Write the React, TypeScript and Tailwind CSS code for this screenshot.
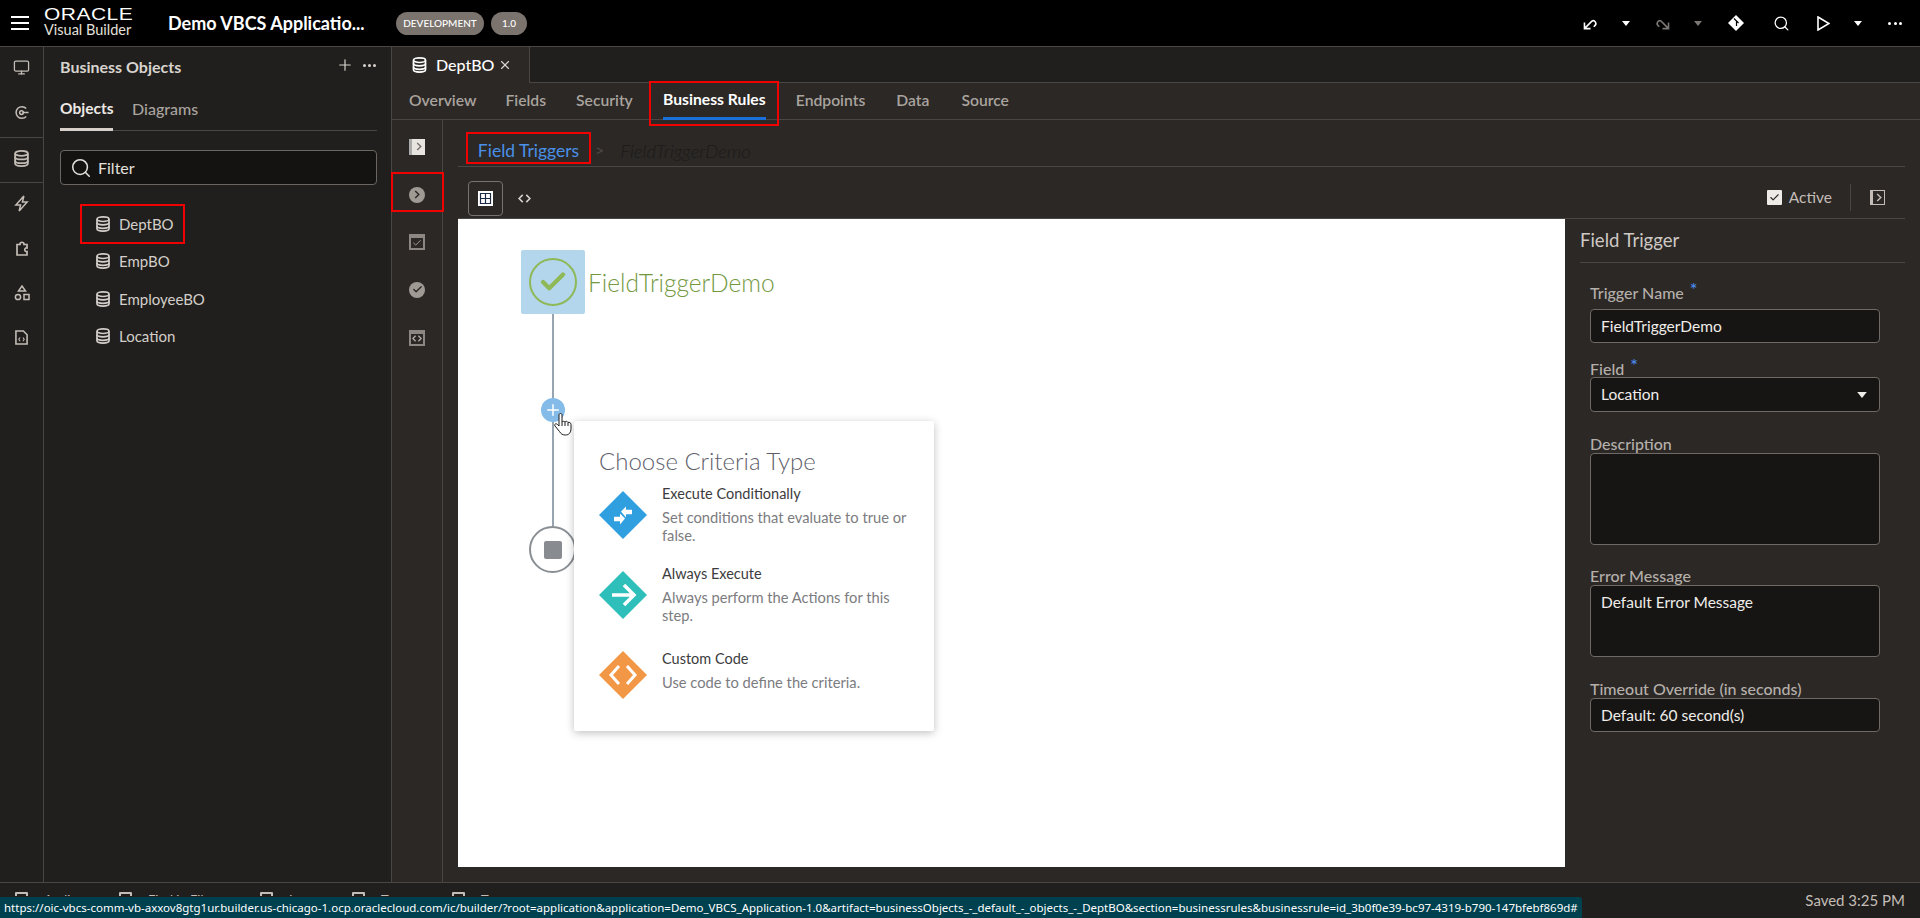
import type { ReactNode } from 'react'
import { Check, Monitor, Plus, Search, X } from 'lucide-react'

const FONT = "font-['Lato','Noto_Sans',sans-serif]"

function Db({ className = 'w-[14px] h-[16px]' }: { className?: string }) {
  return (
    <svg viewBox="0 0 14 16" className={`shrink-0 ${className}`} fill="none" stroke="currentColor" strokeWidth="1.7">
      <ellipse cx="7" cy="3.2" rx="6" ry="2.3" />
      <path d="M1 3.2v9.6c0 1.3 2.7 2.3 6 2.3s6-1 6-2.3V3.2" />
      <path d="M1 6.5c0 1.3 2.7 2.3 6 2.3s6-1 6-2.3M1 10c0 1.3 2.7 2.3 6 2.3s6-1 6-2.3" />
    </svg>
  )
}

function Caret({ className = 'w-[8px] h-[5px]' }: { className?: string }) {
  return (
    <svg viewBox="0 0 8 5" className={className} fill="currentColor">
      <path d="M0 0h8L4 5z" />
    </svg>
  )
}

function Chevron({ stroke = 'currentColor' }: { stroke?: string }) {
  return (
    <svg viewBox="0 0 6 10" className="w-[6px] h-[9px]" fill="none" stroke={stroke} strokeWidth="1.6">
      <path d="M1 1l4 4-4 4" />
    </svg>
  )
}

function RailIcon({ children, className = 'h-[45px]' }: { children: ReactNode; className?: string }) {
  return <div className={`flex items-center justify-center text-[#c4bdb7] ${className}`}>{children}</div>
}

function ObjectRow({ name, boxed }: { name: string; boxed?: boolean }) {
  return (
    <div
      className={`flex items-center h-[37.5px] w-[103px] ml-[21px] pl-[15px] gap-[9px] whitespace-nowrap text-[15px] text-[#d4cfca] ${
        boxed ? 'outline-2 -outline-offset-1 outline-[#f00000]' : ''
      }`}
    >
      <Db />
      <span>{name}</span>
    </div>
  )
}

function SideSquare({ children }: { children: ReactNode }) {
  return <div className="h-[47.7px] flex items-center justify-center text-[#a09a95]">{children}</div>
}

function Label({ text, star, className = '' }: { text: string; star?: boolean; className?: string }) {
  return (
    <div className={`flex text-[16px] font-medium text-[#b5afaa] leading-[18px] ${className}`}>
      {text}
      {star && <span className="ml-[6px] -mt-[4px] text-[18px] leading-[18px] text-[#4a8cf0]">*</span>}
    </div>
  )
}

function Box({ children, className = '' }: { children?: ReactNode; className?: string }) {
  return (
    <div className={`bg-[#161514] border border-[#6f6a65] rounded-[4px] px-[10px] text-[15.5px] text-[#f0ede9] ${className}`}>
      {children}
    </div>
  )
}

function Diamond({ color, children, y }: { color: string; children: ReactNode; y: string }) {
  return (
    <div className={`absolute left-[25px] ${y} w-[48px] h-[48px]`}>
      <svg viewBox="0 0 48 48" className="w-full h-full">
        <path d="M24 0l24 24-24 24L0 24z" fill={color} />
        {children}
      </svg>
    </div>
  )
}

function BottomItem({ label, width }: { label: string; width: string }) {
  return (
    <div className={`flex items-start gap-[16px] ${width} shrink-0 h-[4px] overflow-hidden text-[13px] leading-[16px] text-[#c4bdb7]`}>
      <div className="w-[13px] h-[13px] shrink-0 border-2 border-[#c4bdb7] rounded-[1px]" />
      <span className="whitespace-nowrap">{label}</span>
    </div>
  )
}

function CriteriaText({ title, desc, top }: { title: string; desc: string; top: string }) {
  return (
    <div className={`absolute left-[88px] ${top} w-[256px]`}>
      <div className="text-[14.5px] leading-[20px] text-[#3c3c40]">{title}</div>
      <div className="mt-[4px] text-[14.7px] leading-[18px] text-[#7c7c7f]">{desc}</div>
    </div>
  )
}

export default function App() {
  return (
    <div className={`relative w-[1920px] h-[918px] overflow-hidden bg-[#201f1d] flex flex-col ${FONT}`}>
      {/* top bar */}
      <header className="h-[47px] shrink-0 bg-black border-b border-[#4a4643] flex items-center text-white">
        <div className="ml-[11px] w-[18px] flex flex-col gap-[3.5px]">
          <div className="h-[2.5px] bg-white" />
          <div className="h-[2.5px] bg-white" />
          <div className="h-[2.5px] bg-white" />
        </div>
        <div className="ml-[15px] w-[110px] flex flex-col -mt-[1px]">
          <div className="text-[16.5px] leading-[14px] tracking-[0.4px] origin-left scale-x-[1.27] font-['Liberation_Sans',sans-serif]">ORACLE</div>
          <div className="text-[14.5px] leading-[16px] mt-[1px] text-[#e4e0dc]">Visual Builder</div>
        </div>
        <div className="ml-[14px] w-[228px] text-[18px] font-bold">Demo VBCS Applicatio...</div>
        <div className="h-[23px] w-[88px] rounded-full bg-[#7b736e] flex items-center justify-center text-[10px] font-medium">DEVELOPMENT</div>
        <div className="ml-[7px] h-[23px] w-[36px] rounded-full bg-[#7b736e] flex items-center justify-center text-[10px] font-medium">1.0</div>
        <div className="ml-auto flex items-center">
          <svg viewBox="0 0 16 14" className="w-[15px] h-[13px]" fill="none" stroke="currentColor" strokeWidth="1.7">
            <path d="M1.5 12.5l8-8c3-2 5.5 2.5 3.5 4.5l-1.5 1.5M1.5 6v6.5H8" />
          </svg>
          <Caret className="ml-[24px] w-[8px] h-[5px]" />
          <svg viewBox="0 0 16 14" className="ml-[25px] w-[15px] h-[13px] text-[#7a7673]" fill="none" stroke="currentColor" strokeWidth="1.7">
            <path d="M14.5 12.5l-8-8c-3-2-5.5 2.5-3.5 4.5l1.5 1.5M14.5 6v6.5H8" />
          </svg>
          <Caret className="ml-[24px] w-[8px] h-[5px] text-[#7a7673]" />
          <svg viewBox="0 0 16 16" className="ml-[26px] w-[16px] h-[16px]">
            <path d="M8 0l8 8-8 8-8-8z" fill="#fff" />
            <path d="M6 3.5l2.5 2.5v5M8.5 6l2 2" stroke="#000" strokeWidth="1.2" fill="none" />
          </svg>
          <Search size={17} className="ml-[29px]" strokeWidth={1.8} />
          <svg viewBox="0 0 13 15" className="ml-[27px] w-[13px] h-[15px]" fill="none" stroke="currentColor" strokeWidth="1.6">
            <path d="M1 1l11 6.5L1 14z" />
          </svg>
          <Caret className="ml-[24px] w-[8px] h-[5px]" />
          <div className="ml-[26px] mr-[18px] flex gap-[2.5px]">
            <div className="w-[3px] h-[3px] rounded-full bg-white" />
            <div className="w-[3px] h-[3px] rounded-full bg-white" />
            <div className="w-[3px] h-[3px] rounded-full bg-white" />
          </div>
        </div>
      </header>

      <div className="h-[835px] shrink-0 flex">
        {/* left rail */}
        <nav className="w-[44px] shrink-0 border-r border-[#4a4643] flex flex-col">
          <RailIcon className="h-[40px]"><Monitor size={17} strokeWidth={1.8} /></RailIcon>
          <RailIcon className="h-[50px]">
            <svg viewBox="0 0 16 16" className="w-[15px] h-[15px]" fill="none" stroke="currentColor" strokeWidth="1.6">
              <path d="M13 3.8A6.2 6.2 0 1 0 13 12.2" />
              <circle cx="8" cy="8" r="2" />
              <path d="M9 8h6.5" />
            </svg>
          </RailIcon>
          <div className="border-y border-[#4a4643]">
            <RailIcon className="h-[44px] pb-[3px]"><Db className="w-[15px] h-[17px]" /></RailIcon>
          </div>
          <RailIcon className="h-[42px] pb-[2px]">
            <svg viewBox="0 0 16 18" className="w-[15px] h-[17px]" fill="none" stroke="currentColor" strokeWidth="1.6">
              <path d="M10.5 1L2 10.5h5L5.5 17 14 7.5H9z" />
            </svg>
          </RailIcon>
          <RailIcon>
            <svg viewBox="0 0 16 16" className="w-[16px] h-[16px]" fill="none" stroke="currentColor" strokeWidth="1.7">
              <path d="M3 15V4.5h3c-.5-3 4.5-3 4 0h3V8c-3-.5-3 4 0 3.500V15z" />
            </svg>
          </RailIcon>
          <RailIcon>
            <svg viewBox="0 0 16 16" className="w-[16px] h-[16px]" fill="none" stroke="currentColor" strokeWidth="1.5">
              <path d="M8 1l3.5 5h-7z" />
              <circle cx="4" cy="12" r="2.6" />
              <rect x="10" y="9.5" width="5" height="5" />
            </svg>
          </RailIcon>
          <RailIcon>
            <svg viewBox="0 0 14 16" className="w-[13px] h-[15px]" fill="none" stroke="currentColor" strokeWidth="1.7">
              <path d="M1 1h8l4 4v10H1z" />
              <path d="M5.5 8L4 10l1.5 2M8.5 8L10 10l-1.5 2" strokeWidth="1.1" />
            </svg>
          </RailIcon>
        </nav>

        {/* business objects panel */}
        <aside className="w-[348px] shrink-0 border-r border-[#4a4643]">
          <div className="pl-[16px] pr-[14px]">
            <div className="h-[40px] flex items-center text-[#d8d3ce]">
              <span className="text-[16px] font-bold">Business Objects</span>
              <Plus size={18} className="ml-auto -mt-[4px]" strokeWidth={1.6} />
              <div className="ml-[9px] mr-[1px] -mt-[4px] flex gap-[2px]">
                <div className="w-[3px] h-[3px] rounded-full bg-[#d8d3ce]" />
                <div className="w-[3px] h-[3px] rounded-full bg-[#d8d3ce]" />
                <div className="w-[3px] h-[3px] rounded-full bg-[#d8d3ce]" />
              </div>
            </div>
            <div className="h-[44px] border-b border-[#4a4643] flex items-stretch text-[15.5px]">
              <div className="w-[53px] border-b-[3px] border-[#d6cfca] -mb-px pt-[10px] font-bold text-[#ece8e4] whitespace-nowrap">Objects</div>
              <div className="ml-[19px] pt-[10px] text-[16px] font-medium text-[#aaa49f]">Diagrams</div>
            </div>
            <div className="mt-[19px] h-[35px] bg-[#141312] border border-[#6b6661] rounded-[4px] flex items-center pl-[9px] text-[16px] text-[#e4e0dc]">
              <Search size={22} strokeWidth={1.7} />
              <span className="ml-[6px]">Filter</span>
            </div>
          </div>
          <div className="mt-[20px] pl-[16px]">
            <ObjectRow name="DeptBO" boxed />
            <ObjectRow name="EmpBO" />
            <ObjectRow name="EmployeeBO" />
            <ObjectRow name="Location" />
          </div>
        </aside>

        {/* editor */}
        <main className="flex-1 min-w-0 flex flex-col">
          <div className="h-[36px] shrink-0 flex items-stretch border-b border-[#4a4643]">
            <div className="w-[138px] -mb-px bg-[#2b2826] border-r border-[#4a4643] flex items-center pl-[20px] text-white text-[16px] font-medium">
              <Db className="w-[15px] h-[16px]" />
              <span className="ml-[9px]">DeptBO</span>
              <X size={14} className="ml-[4px] text-[#d8d3ce]" />
            </div>
          </div>
          <div className="flex-1 min-h-0 flex flex-col bg-[#2b2826]">
            <div className="h-[37px] shrink-0 border-b border-[#4a4643] flex items-stretch pl-[17px] text-[15.7px] font-semibold text-[#a9a39e]">
              <div className="flex items-center">Overview</div>
              <div className="flex items-center ml-[29px]">Fields</div>
              <div className="flex items-center ml-[30px]">Security</div>
              <div className="relative flex items-center ml-[30px] w-[103px] justify-center whitespace-nowrap font-bold text-white border-b-[3px] border-[#1a6fd8] -mb-px">
                Business Rules
                <div className="absolute -left-[14px] -right-[13px] -top-[2px] h-[45px] border-2 border-[#f00000]" />
              </div>
              <div className="flex items-center ml-[30px]">Endpoints</div>
              <div className="flex items-center ml-[31px]">Data</div>
              <div className="flex items-center ml-[32px]">Source</div>
            </div>
            <div className="flex-1 min-h-0 flex">
              {/* rule steps rail */}
              <div className="relative w-[51px] shrink-0 border-r border-[#4a4643] pt-[3px]">
                <SideSquare>
                  <div className="w-[16px] h-[16px] bg-[#e8e4e0] flex items-center justify-center text-[#77726e] border-l-[3px] border-[#aaa]">
                    <Chevron />
                  </div>
                </SideSquare>
                <SideSquare>
                  <div className="w-[16px] h-[16px] rounded-full bg-[#a09a95] flex items-center justify-center">
                    <Chevron stroke="#2b2826" />
                  </div>
                </SideSquare>
                <SideSquare>
                  <div className="w-[16px] h-[16px] border-2 border-t-4 border-[#8c8783] flex items-center justify-center text-[#b5afaa]">
                    <Check size={10} strokeWidth={2} />
                  </div>
                </SideSquare>
                <SideSquare>
                  <div className="w-[16px] h-[16px] rounded-full bg-[#a09a95] flex items-center justify-center text-[#2b2826]">
                    <Check size={11} strokeWidth={3} />
                  </div>
                </SideSquare>
                <SideSquare>
                  <div className="w-[16px] h-[16px] border-2 border-t-4 border-[#8c8783] flex items-center justify-center text-[#b5afaa]">
                    <svg viewBox="0 0 14 10" className="w-[10px] h-[7px]" fill="none" stroke="currentColor" strokeWidth="1.8">
                      <path d="M5 1L1 5l4 4M9 1l4 4-4 4" />
                    </svg>
                  </div>
                </SideSquare>
                <div className="absolute -left-px top-[52px] w-[53px] h-[40px] border-2 border-[#f00000]" />
              </div>

              <div className="flex-1 min-w-0 flex flex-col">
                {/* breadcrumb */}
                <div className="ml-[15px] mr-[15px] h-[47px] shrink-0 border-b border-[#4a4643] flex items-end pb-[2px]">
                  <div className="ml-[8px] w-[125px] h-[32px] border-2 border-[#f00000] flex items-center justify-center pt-[6px] text-[17.5px] leading-[22px] text-[#4a90e8]">
                    Field Triggers
                  </div>
                  <span className="ml-[4px] mb-[2px] text-[16px] text-[#4f4b48]">&gt;</span>
                  <span className="ml-[16px] mb-[1px] text-[18.5px] leading-[24px] italic font-light text-[#1c1a19]">FieldTriggerDemo</span>
                </div>
                {/* toolbar */}
                <div className="ml-[15px] mr-[15px] h-[52px] shrink-0 border-b border-[#4a4643] flex items-end pb-[2px]">
                  <div className="ml-[10px] w-[35px] h-[35px] rounded-[4px] border border-[#77726e] flex items-center justify-center">
                    <svg viewBox="0 0 15 15" className="w-[15px] h-[15px]">
                      <rect width="15" height="15" fill="#fff" />
                      <path d="M2.5 2.5h10v10h-10zM7.5 2.5v10M2.5 7.500h10" fill="none" stroke="#1c2a44" strokeWidth="1.2" />
                    </svg>
                  </div>
                  <svg viewBox="0 0 14 10" className="ml-[15px] mb-[13px] w-[13px] h-[9px] text-[#d8d3ce]" fill="none" stroke="currentColor" strokeWidth="1.7">
                    <path d="M5 1L1 5l4 4M9 1l4 4-4 4" />
                  </svg>
                  <div className="ml-auto mb-[5px] flex items-center">
                    <div className="w-[15px] h-[15px] bg-[#eeeae6] rounded-[1px] flex items-center justify-center text-[#2b2826]">
                      <Check size={11} strokeWidth={2.5} />
                    </div>
                    <span className="ml-[7px] text-[15.5px] text-[#c4bdb7]">Active</span>
                    <div className="ml-[18px] h-[27px] border-l border-[#4a4643]" />
                    <div className="ml-[19px] mr-[20px] w-[15px] h-[15px] border border-[#c4bdb7] border-l-[3px] flex items-center justify-center text-[#c4bdb7]">
                      <Chevron />
                    </div>
                  </div>
                </div>

                <div className="flex-1 min-h-0 flex pb-[15px]">
                  {/* canvas */}
                  <div className="relative ml-[15px] w-[1107px] bg-white overflow-hidden">
                    <div className="absolute left-[63px] top-[31px] w-[64px] h-[64px] rounded-[2px] bg-[#b3d6ec] flex items-center justify-center">
                      <div className="w-[48px] h-[48px] rounded-full border-2 border-[#8fb958] flex items-center justify-center text-[#8fb958]">
                        <Check size={30} strokeWidth={3.5} />
                      </div>
                    </div>
                    <div className="absolute left-[130px] top-[47px] text-[24.5px] leading-[34px] font-light text-[#73993f]">FieldTriggerDemo</div>
                    <div className="absolute left-[94px] top-[95px] w-[2px] h-[212px] bg-[#98a5b0]" />
                    <div className="absolute left-[83px] top-[179px] w-[24px] h-[24px] rounded-full bg-[#85bbe8] flex items-center justify-center text-white">
                      <Plus size={18} strokeWidth={2} />
                    </div>
                    <div className="absolute left-[71px] top-[307px] w-[47px] h-[47px] rounded-full border-2 border-[#8a8f94] bg-white flex items-center justify-center">
                      <div className="w-[18px] h-[18px] rounded-[2px] bg-[#888c90]" />
                    </div>

                    {/* popup */}
                    <div className="absolute left-[116px] top-[202px] w-[360px] h-[310px] bg-white rounded-[2px] shadow-[0_2px_8px_rgba(0,0,0,0.25)]">
                      <div className="absolute left-[25px] top-[23px] text-[24px] leading-[34px] font-light text-[#5f5f6b]">Choose Criteria Type</div>
                      <Diamond color="#2f9fdf" y="top-[70px]">
                        <path d="M22 20.5l5-5v3.2h6v4.600h-6v3.200z" fill="#fff" />
                        <path d="M26 27.5l-5-5v3.2h-6v4.600h6v3.200z" fill="#fff" />
                      </Diamond>
                      <Diamond color="#2ebfbb" y="top-[150px]">
                        <path d="M13 24h21M25 14l10 10-10 10" fill="none" stroke="#fff" strokeWidth="3.5" />
                      </Diamond>
                      <Diamond color="#f29745" y="top-[230px]">
                        <path d="M20 15l-8 9 8 9M28 15l8 9-8 9" fill="none" stroke="#fff" strokeWidth="3" />
                      </Diamond>
                      <CriteriaText top="top-[63px]" title="Execute Conditionally" desc="Set conditions that evaluate to true or false." />
                      <CriteriaText top="top-[143px]" title="Always Execute" desc="Always perform the Actions for this step." />
                      <CriteriaText top="top-[228px]" title="Custom Code" desc="Use code to define the criteria." />
                    </div>

                    {/* hand cursor */}
                    <svg viewBox="0 0 20 24" className="absolute left-[96px] top-[193px] w-[20px] h-[24px]" fill="#fff" stroke="#1a1a1a" strokeWidth="1">
                      <path d="M5 3c0-2 3-2 3 0v7c1-1 2-1 3 0 1-1 2-1 3 .5 1-.5 3 0 3 2v4c0 4-2 6.5-5.5 6.5-3 0-4.5-1-6-3.5L1 14c-1-2 1-3 2.5-1.5L5 14z" />
                      <path d="M8 10v4M11 10v4M14 10.5V14" fill="none" />
                    </svg>
                  </div>

                  {/* properties */}
                  <div className="flex-1 min-w-0 pl-[15px] pr-[15px] border-l border-[#4a4643] -ml-px">
                    <div className="h-[44px] pt-[1px] border-b border-[#4a4643] flex items-center text-[18.5px] text-[#cfc9c4]">Field Trigger</div>
                    <div className="pl-[10px] w-[300px]">
                      <Label text="Trigger Name" star className="mt-[21px]" />
                      <Box className="mt-[7px] h-[34px] pt-[1px] flex items-center">FieldTriggerDemo</Box>
                      <Label text="Field" star className="mt-[17px]" />
                      <Box className="-mt-[1px] h-[35px] pt-[1px] flex items-center justify-between pr-[12px]">
                        Location
                        <Caret className="w-[10px] h-[6px]" />
                      </Box>
                      <Label text="Description" className="mt-[23px]" />
                      <Box className="h-[92px]" />
                      <Label text="Error Message" className="mt-[22px]" />
                      <Box className="h-[72px] pt-[5px]">Default Error Message</Box>
                      <Label text="Timeout Override (in seconds)" className="mt-[23px]" />
                      <Box className="h-[34px] pt-[1px] flex items-center">Default: 60 second(s)</Box>
                    </div>
                  </div>
                </div>
              </div>
            </div>
          </div>
        </main>
      </div>

      {/* footer */}
      <footer className="h-[36px] shrink-0 border-t border-[#4a4643] flex items-start pl-[15px] pt-[9px] text-[#c4bdb7]">
        <BottomItem label="Audits" width="w-[104px]" />
        <BottomItem label="Find in Files" width="w-[141px]" />
        <BottomItem label="Logs" width="w-[92px]" />
        <BottomItem label="Tests" width="w-[100px]" />
        <BottomItem label="Trace" width="w-[100px]" />
        <span className="ml-auto mr-[15px] -mt-[10px] text-[15px] leading-[36px]">Saved 3:25 PM</span>
      </footer>

      {/* browser link status */}
      <div className="absolute left-0 bottom-0 h-[21px] w-[1582px] rounded-tr-[3px] bg-[#00414f] pl-[4px] flex items-center text-[11.5px] text-white whitespace-nowrap font-['Noto_Sans',sans-serif]">
        https://oic-vbcs-comm-vb-axxov8gtg1ur.builder.us-chicago-1.ocp.oraclecloud.com/ic/builder/?root=application&amp;application=Demo_VBCS_Application-1.0&amp;artifact=businessObjects_-_default_-_objects_-_DeptBO&amp;section=businessrules&amp;businessrule=id_3b0f0e39-bc97-4319-b790-147bfebf869d#
      </div>
    </div>
  )
}
